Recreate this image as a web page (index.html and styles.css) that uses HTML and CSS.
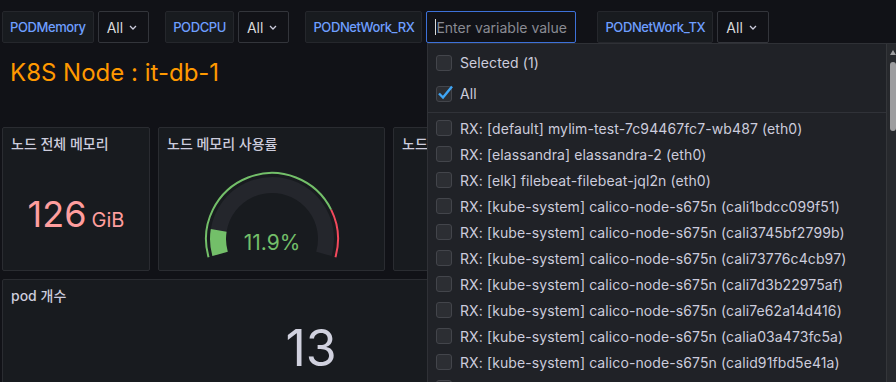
FILE: index.html
```html
<!DOCTYPE html>
<html>
<head>
    <title>K8S Node</title>
    <link rel="stylesheet" href="styles.css">
</head>

<body>
    <div class="topbar">
        <div class="var">
            <span class="var-label">PODMemory</span>
            <span class="var-select">All <svg class="chev" width="8" height="5" viewBox="0 0 8 5"><path d="M1 1l3 3 3-3"/></svg></span>
        </div>
        <div class="var">
            <span class="var-label">PODCPU</span>
            <span class="var-select">All <svg class="chev" width="8" height="5" viewBox="0 0 8 5"><path d="M1 1l3 3 3-3"/></svg></span>
        </div>
        <div class="var var-wide">
            <span class="var-label">PODNetWork_RX</span>
            <div class="var-input"><span class="caret"></span><span class="placeholder">Enter variable value</span></div>
        </div>
        <div class="var">
            <span class="var-label">PODNetWork_TX</span>
            <span class="var-select">All <svg class="chev" width="8" height="5" viewBox="0 0 8 5"><path d="M1 1l3 3 3-3"/></svg></span>
        </div>
    </div>

    <div class="dash-title">K8S Node : it-db-1</div>

    <div class="row row-stats">
        <div class="panel">
            <div class="panel-title">노드 전체 메모리</div>
            <div class="panel-body stat-mem">126 <span class="unit">GiB</span></div>
        </div>
        <div class="panel">
            <div class="panel-title">노드 메모리 사용률</div>
            <div class="panel-body gauge-body">
                <!-- gauge: 212deg sweep, threshold at 80% -->
                <svg class="gauge" width="140" height="100" viewBox="0 0 140 100">
                    <path d="M6.56 88.19 A66 66 0 0 1 129.12 40.65" fill="none" stroke="#73bf69" stroke-width="2"/>
                    <path d="M129.12 40.65 A66 66 0 0 1 133.44 88.19" fill="none" stroke="#f2495c" stroke-width="2"/>
                    <path d="M18.09 84.88 A54 54 0 1 1 121.91 84.88" fill="none" stroke="#24262c" stroke-width="16"/>
                    <path d="M18.09 84.88 A54 54 0 0 1 16.70 61.37" fill="none" stroke="#73bf69" stroke-width="16"/>
                    <text x="70" y="81" text-anchor="middle" class="gauge-text">11.9%</text>
                </svg>
            </div>
        </div>
        <div class="panel">
            <div class="panel-title panel-title-short">노드 CPU</div>
            <div class="panel-body"></div>
        </div>
        <div class="panel">
            <div class="panel-title"></div>
            <div class="panel-body"></div>
        </div>
    </div>

    <div class="row row-pods">
        <div class="panel">
            <div class="panel-title">pod 개수</div>
            <div class="panel-body stat-pods">13</div>
        </div>
    </div>

    <div class="dropdown">
        <div class="dd-content">
            <div class="dd-head">
                <span class="box"></span>Selected (1)
            </div>
            <div class="dd-head">
                <span class="box"><svg class="check" width="16" height="16" viewBox="0 0 16 16"><path d="M3 7.5l4 4L16 0.5"/></svg></span>All
            </div>
            <div class="dd-sep"></div>
            <ul class="dd-list">
                <li><span class="box"></span>RX: [default] mylim-test-7c94467fc7-wb487 (eth0)</li>
                <li><span class="box"></span>RX: [elassandra] elassandra-2 (eth0)</li>
                <li><span class="box"></span>RX: [elk] filebeat-filebeat-jql2n (eth0)</li>
                <li><span class="box"></span>RX: [kube-system] calico-node-s675n (cali1bdcc099f51)</li>
                <li><span class="box"></span>RX: [kube-system] calico-node-s675n (cali3745bf2799b)</li>
                <li><span class="box"></span>RX: [kube-system] calico-node-s675n (cali73776c4cb97)</li>
                <li><span class="box"></span>RX: [kube-system] calico-node-s675n (cali7d3b22975af)</li>
                <li><span class="box"></span>RX: [kube-system] calico-node-s675n (cali7e62a14d416)</li>
                <li><span class="box"></span>RX: [kube-system] calico-node-s675n (calia03a473fc5a)</li>
                <li><span class="box"></span>RX: [kube-system] calico-node-s675n (calid91fbd5e41a)</li>
                <li><span class="box"></span></li>
            </ul>
        </div>
        <div class="scroll">
            <svg class="scroll-up" width="6" height="5" viewBox="0 0 6 5"><path d="M0 5L3 0L6 5Z"/></svg>
            <div class="thumb"></div>
        </div>
    </div>
</body>

</html>
```

FILE: styles.css
```css
body {
    margin: 0;
    width: 896px;
    height: 382px;
    overflow: hidden;
    position: relative;
    background-color: #111217;
    color: #ccccdc;
    font-family: Inter, "Noto Sans CJK KR", sans-serif;
}

/* variable bar */
.topbar {
    display: flex;
    padding: 11px 0 0 2px;
    height: 32px;
}

.var {
    display: flex;
    gap: 4px;
    height: 32px;
    margin-right: 16px;
}

.var-wide {
    margin-right: 21px;
}

.var-label {
    display: flex;
    align-items: center;
    box-sizing: border-box;
    padding: 0 7px;
    background-color: #181b1f;
    border: 1px solid #25272c;
    border-radius: 2px;
    color: #6e9fff;
    font-size: 13px;
    font-weight: 500;
    letter-spacing: -0.4px;
}

.var-select {
    display: flex;
    align-items: center;
    gap: 6px;
    box-sizing: border-box;
    padding: 0 11px 0 8px;
    border: 1px solid #33353b;
    border-radius: 2px;
    font-size: 14px;
    color: #d8d9da;
}

.chev path {
    fill: none;
    stroke: #ccccdc;
    stroke-width: 1.3;
}

.var-input {
    display: flex;
    align-items: center;
    width: 150px;
    box-sizing: border-box;
    padding-left: 8px;
    border: 1px solid #3d71d9;
    border-radius: 2px;
    font-size: 14px;
}

.caret {
    width: 1px;
    height: 16px;
    background-color: #d8d9da;
}

.placeholder {
    color: #8a8b93;
}

/* title */
.dash-title {
    height: 84px;
    box-sizing: border-box;
    padding: 15px 0 0 10px;
    font-size: 24px;
    line-height: 30px;
    color: #ff9900;
}

/* panels */
.row {
    display: grid;
    gap: 8px;
    padding-left: 2px;
}

.row-stats {
    grid-template-columns: 148px 227px 227px 227px;
    height: 144px;
}

.row-pods {
    grid-template-columns: 618px;
    height: 160px;
    margin-top: 8px;
}

.panel {
    display: flex;
    flex-direction: column;
    box-sizing: border-box;
    background-color: #181b1f;
    border: 1px solid #2a2c31;
    border-radius: 2px;
    overflow: hidden;
}

.panel-title {
    height: 18px;
    padding: 7px 8px 0;
    font-size: 14px;
    font-weight: 500;
    line-height: 18px;
    white-space: nowrap;
}

.panel-title-short {
    width: 26px;
    overflow: hidden;
}

.panel-body {
    flex: 1;
    display: flex;
    align-items: center;
    justify-content: center;
}

.stat-mem {
    padding-top: 5px;
    font-size: 36px;
    color: #ff9e9e;
    align-items: baseline;
    align-content: center;
    flex-wrap: wrap;
    gap: 5px;
}

.unit {
    font-size: 20px;
}

.gauge-body {
    align-items: flex-start;
    padding-top: 16px;
}

.gauge-text {
    fill: #73bf69;
    font-family: Inter, sans-serif;
    font-size: 21px;
}

.stat-pods {
    align-items: flex-start;
    padding-top: 18px;
    font-size: 50px;
    line-height: 50px;
    color: #d0d1de;
}

/* variable dropdown */
.dropdown {
    position: absolute;
    left: 427px;
    top: 43px;
    right: 0;
    bottom: 0;
    display: flex;
    box-sizing: border-box;
    background-color: #202227;
    border-left: 1px solid #2f3136;
    border-top: 1px solid #2f3136;
}

.dd-content {
    flex: 1;
    padding-top: 3px;
    font-size: 14px;
    letter-spacing: 0.1px;
    color: #ccccdc;
}

.dd-head,
.dd-list li {
    display: flex;
    align-items: center;
    gap: 8px;
    padding-left: 8px;
    white-space: nowrap;
}

.dd-head {
    height: 31px;
}

.dd-sep {
    height: 1px;
    margin-top: 3px;
    background-color: #303238;
}

.dd-list {
    list-style: none;
    margin: 0;
    padding: 2px 0 0;
}

.dd-list li {
    height: 26px;
}

.box {
    position: relative;
    flex: none;
    width: 16px;
    height: 16px;
    box-sizing: border-box;
    background-color: #2c2e33;
    border: 1px solid #43454b;
    border-radius: 3px;
}

.check {
    position: absolute;
    left: -1px;
    top: -1px;
    overflow: visible;
}

.check path {
    fill: none;
    stroke: #3fa6f6;
    stroke-width: 2.4;
}

.scroll {
    width: 10px;
    padding: 6px 0 0 3px;
    box-sizing: border-box;
    background-color: #27292d;
    border-left: 1px solid #34363a;
}

.scroll-up {
    display: block;
    fill: #9d9d9f;
}

.thumb {
    width: 6px;
    height: 69px;
    margin-top: 7px;
    background-color: #9d9d9f;
    border-radius: 3px;
}
```
